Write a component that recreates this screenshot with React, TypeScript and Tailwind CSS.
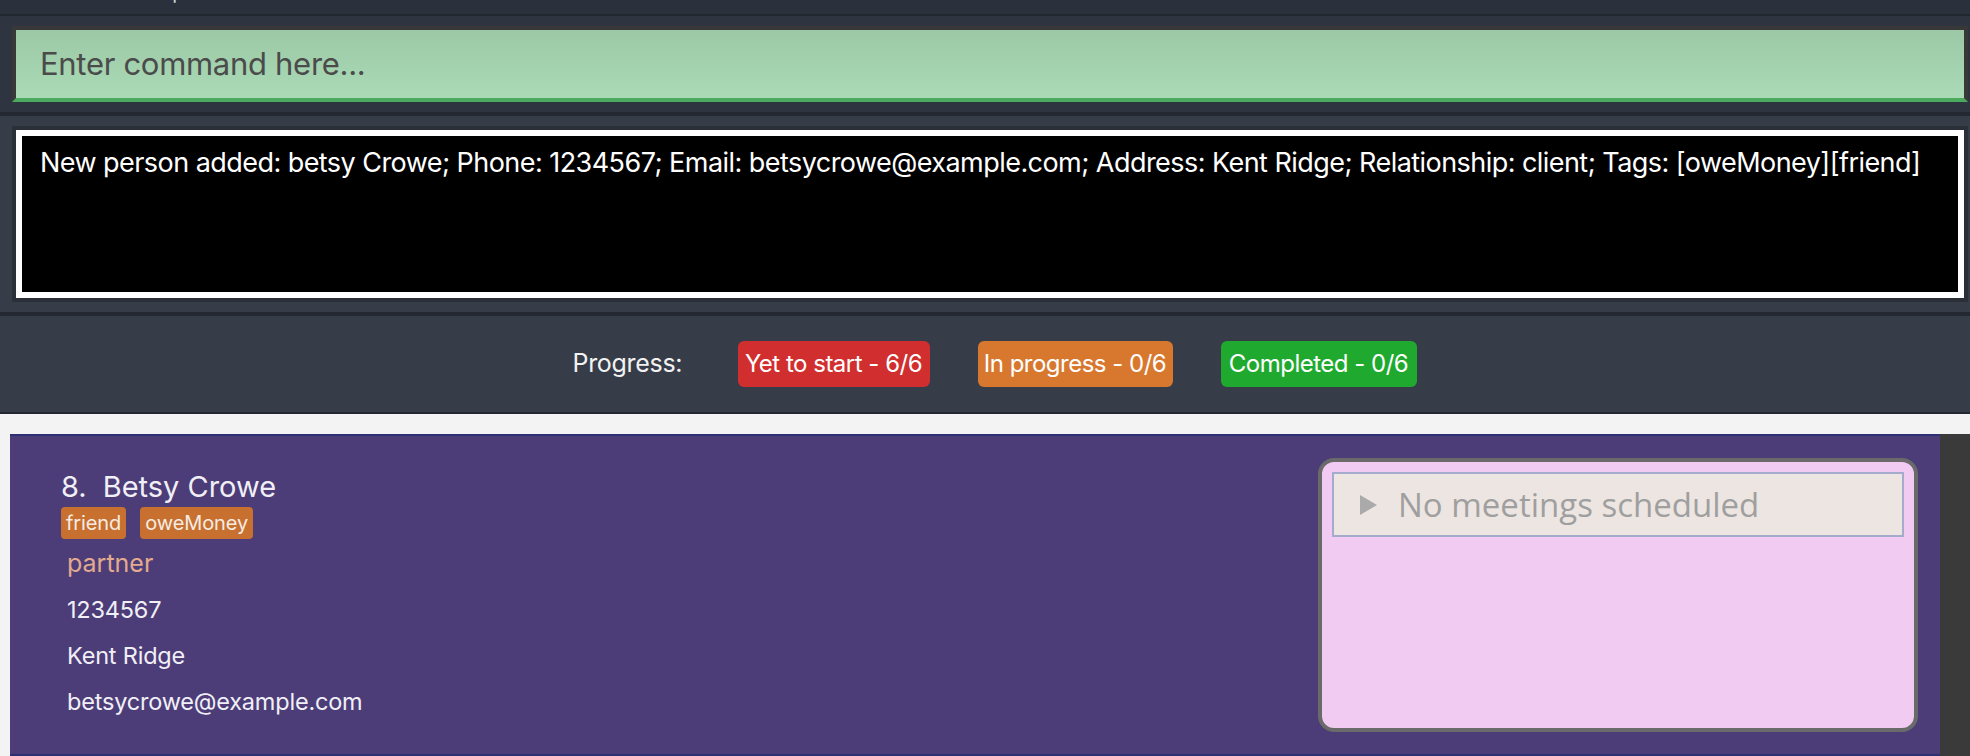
import React from "react";

export default function App() {
  return (
    <div className="w-[1970px] h-[756px] overflow-hidden bg-[#f3f3f3] font-['Inter',sans-serif]">
      {/* menu strip (only descenders visible) */}
      <div className="h-[14px] bg-[#2b313c] overflow-hidden">
        <div className="-mt-[22px] pl-[141px] text-[20px] leading-[28px] text-[#cfd3da]">Help</div>
      </div>
      <div className="h-[2px] bg-[#22272f]" />

      {/* command box */}
      <div className="h-[96px] bg-[#2e3440] pt-[10px] pl-[12px] pr-[2px]">
        <div className="h-[76px] flex items-center border-4 border-[#383838] border-b-[#4caa5f] bg-gradient-to-b from-[#9cc8a5] to-[#aadbb6] pl-[24px]">
          <span className="text-[31px] tracking-[-0.3px] text-[#4b4b4b]">Enter command here...</span>
        </div>
      </div>
      <div className="h-[4px] bg-[#232831]" />

      {/* result display */}
      <div className="h-[196px] bg-[#363c48] pt-[10px] pl-[12px] pr-[2px]">
        <div className="h-[176px] border-4 border-[#2a2f38]">
          <div className="h-full border-[6px] border-white bg-black pl-[18px] pt-[10px]">
            <p className="text-[27px] leading-[33px] tracking-[-0.55px] text-white whitespace-nowrap">
              New person added: betsy Crowe; Phone: 1234567; Email: betsycrowe@example.com; Address: Kent Ridge; Relationship: client; Tags: [oweMoney][friend]
            </p>
          </div>
        </div>
      </div>
      <div className="h-[4px] bg-[#232831]" />

      {/* progress */}
      <div className="h-[96px] bg-[#363c48] flex items-center justify-center pl-[19px]">
        <span className="w-[109px] text-[25px] tracking-[-0.3px] text-[#f2f2f2] whitespace-nowrap">Progress:</span>
        <div className="ml-[56px] flex gap-[48px]">
          <span className="w-[192px] h-[46px] rounded-[6px] bg-[#d12f2f] flex items-center justify-center text-[24px] tracking-[-0.5px] text-white whitespace-nowrap">Yet to start - 6/6</span>
          <span className="w-[195px] h-[46px] rounded-[6px] bg-[#d8782f] flex items-center justify-center text-[24px] tracking-[-0.5px] text-white whitespace-nowrap">In progress - 0/6</span>
          <span className="w-[196px] h-[46px] rounded-[6px] bg-[#1faa2f] flex items-center justify-center text-[24px] tracking-[-0.5px] text-white whitespace-nowrap">Completed - 0/6</span>
        </div>
      </div>
      <div className="h-[2px] bg-[#23272f]" />

      {/* person list */}
      <div className="pt-[20px] flex h-[342px]">
        <div className="w-[10px] shrink-0" />
        <div className="w-[1930px] shrink-0 h-[322px] border-y-2 border-[#2d3073] bg-[#4c3d78] flex justify-between">
          <div className="pl-[51px] pt-[34px] flex flex-col">
            <div className="flex text-[29px] leading-[34px] text-[#f1eff6] whitespace-nowrap">
              <span>8.</span>
              <span className="ml-[16px]">Betsy Crowe</span>
            </div>
            <div className="mt-[3px] flex gap-[14px]">
              <span className="h-[32px] px-[5px] rounded-[4px] bg-[#c8702f] text-[20px] leading-[32px] tracking-[-0.1px] text-[#f6ece4]">friend</span>
              <span className="h-[32px] px-[5px] rounded-[4px] bg-[#c8702f] text-[20px] leading-[32px] tracking-[-0.1px] text-[#f6ece4]">oweMoney</span>
            </div>
            <div className="ml-[6px] mt-[9px] text-[25px] leading-[30px] text-[#e2aa8e]">partner</div>
            <div className="ml-[6px] mt-[9px] flex flex-col text-[23.5px] leading-[46px] tracking-[-0.2px] text-[#f1eff6]">
              <span>1234567</span>
              <span>Kent Ridge</span>
              <span>betsycrowe@example.com</span>
            </div>
          </div>
          <div className="mt-[22px] mr-[22px] w-[600px] h-[274px] rounded-[16px] border-4 border-[#6a6a6a] bg-[#f1cbf2] p-[10px]">
            <div className="h-[65px] border-2 border-[#a4abcc] bg-[#ede5e1] flex items-center pl-[26px]">
              <svg width="17" height="20" viewBox="0 0 17 20" className="shrink-0">
                <polygon points="0,0 17,10 0,20" fill="#aaaaaa" />
              </svg>
              <span className="ml-[21px] font-['Open_Sans',sans-serif] text-[33px] text-[#9f9f9f] whitespace-nowrap">No meetings scheduled</span>
            </div>
          </div>
        </div>
        <div className="w-[30px] shrink-0 h-[322px] bg-[#3a3a3a]" />
      </div>
    </div>
  );
}
